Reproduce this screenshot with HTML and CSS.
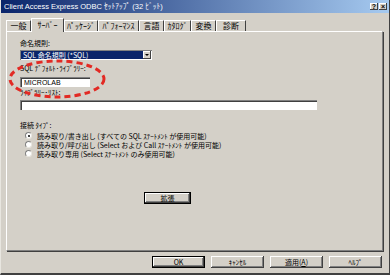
FILE: index.html
```html
<!DOCTYPE html>
<html lang="ja">
<head>
    <meta charset="UTF-8">
    <title>Client Access Express ODBC セットアップ</title>
    <link rel="stylesheet" href="styles.css">
</head>
<body>
    <div class="dialog">
        <div class="titlebar">
            <span class="title">Client Access Express ODBC ｾｯﾄｱｯﾌﾟ (32 ﾋﾞｯﾄ)</span>
            <div class="caption-btns">
                <span class="cbtn">?</span>
                <span class="cbtn">×</span>
            </div>
        </div>

        <div class="tabs">
            <div class="tab w1">一般</div>
            <div class="tab w2 active">ｻｰﾊﾞｰ</div>
            <div class="tab w3">ﾊﾟｯｹｰｼﾞ</div>
            <div class="tab w4">ﾊﾟﾌｫｰﾏﾝｽ</div>
            <div class="tab w5">言語</div>
            <div class="tab w6">ｶﾀﾛｸﾞ</div>
            <div class="tab w7">変換</div>
            <div class="tab w8">診断</div>
        </div>

        <div class="panel">
            <div class="label first">命名規則:</div>
            <div class="combo">
                <span class="combo-value">SQL 命名規則 (*SQL)</span>
                <span class="combo-btn"><span class="arrow"></span></span>
            </div>

            <div class="label gap-a">SQL ﾃﾞﾌｫﾙﾄ･ﾗｲﾌﾞﾗﾘｰ:</div>
            <div class="field short">MICROLAB</div>

            <div class="label gap-b">ﾗｲﾌﾞﾗﾘｰ･ﾘｽﾄ:</div>
            <div class="field wide"></div>

            <div class="label gap-c">接続 ﾀｲﾌﾟ:</div>
            <div class="radios">
                <div class="radio"><span class="dot checked"></span>読み取り/書き出し (すべての SQL ｽﾃｰﾄﾒﾝﾄ が使用可能)</div>
                <div class="radio"><span class="dot"></span>読み取り/呼び出し (Select および Call ｽﾃｰﾄﾒﾝﾄ が使用可能)</div>
                <div class="radio"><span class="dot"></span>読み取り専用 (Select ｽﾃｰﾄﾒﾝﾄ のみ使用可能)</div>
            </div>

            <div class="btn ext">拡張</div>
        </div>

        <div class="buttons">
            <div class="btn default">OK</div>
            <div class="btn">ｷｬﾝｾﾙ</div>
            <div class="btn">適用(<u>A</u>)</div>
            <div class="btn">ﾍﾙﾌﾟ</div>
        </div>

        <!-- red annotation drawn over the dialog -->
        <svg class="mark" width="390" height="275" viewBox="0 0 390 275">
            <ellipse cx="56" cy="79" rx="47" ry="18" fill="none" stroke="#e22a24" stroke-width="3" stroke-dasharray="6 4"/>
        </svg>
    </div>
</body>
</html>
```

FILE: styles.css
```css
body {
    margin: 0;
    font-family: "Liberation Sans", "Noto Sans CJK JP", sans-serif;
    font-size: 7px;
    color: #000;
    background: #d4d0c8;
}
.dialog {
    position: relative;
    width: 390px;
    height: 275px;
    box-sizing: border-box;
    background: #d4d0c8;
    border-left: 1px solid #e8e6e0;
    border-right: 1px solid #404040;
    border-bottom: 2px solid #404040;
    overflow: hidden;
}
.titlebar {
    height: 13px;
    display: flex;
    align-items: center;
    justify-content: space-between;
    padding: 0 2px 0 3px;
    background: linear-gradient(to right, #0a246a, #a6caf0);
    color: #fff;
}
.title {
    font-size: 7.5px;
    line-height: 13px;
}
.caption-btns {
    display: flex;
    gap: 1px;
}
.cbtn {
    width: 8px;
    height: 7px;
    background: #d4d0c8;
    color: #000;
    font-size: 7px;
    font-weight: bold;
    line-height: 7px;
    text-align: center;
    box-shadow: inset -1px -1px #404040, inset 1px 1px #fff;
}
.tabs {
    display: flex;
    align-items: flex-end;
    height: 14px;
    margin-top: 4px;
    padding-left: 5px;
}
.tab {
    height: 10px;
    font-family: "Noto Sans CJK JP", sans-serif;
    font-size: 8px;
    line-height: 10px;
    text-align: center;
    border-top: 1px solid #fff;
    border-left: 1px solid #fff;
    border-right: 1px solid #404040;
    box-sizing: content-box;
}
.tab.active {
    height: 13px;
    line-height: 11px;
    margin-bottom: -1px;
    position: relative;
    z-index: 1;
    background: #d4d0c8;
}
.w1 { width: 23px; }
.w2 { width: 31px; }
.w3 { width: 32px; }
.w4 { width: 39px; }
.w5 { width: 23px; }
.w6 { width: 25px; }
.w7 { width: 23px; }
.w8 { width: 28px; }
.panel {
    height: 220px;
    width: 377px;
    margin-left: 5px;
    box-sizing: border-box;
    padding: 7px 0 0 13px;
    border-top: 1px solid #fff;
    border-left: 1px solid #fff;
    border-right: 1px solid #808080;
    border-bottom: 1px solid #808080;
    box-shadow: 1px 1px 0 #404040;
    font-family: "Noto Sans CJK JP", sans-serif;
}
.label {
    height: 9px;
    line-height: 9px;
}
.gap-a { margin-top: 4px; }
.gap-b { margin-top: 1px; }
.gap-c { margin-top: 11px; }
.combo {
    display: flex;
    width: 132px;
    height: 10px;
    margin-top: 2px;
    box-sizing: border-box;
    padding: 1px;
    background: #fff;
    box-shadow: inset 1px 1px #808080;
}
.combo-value {
    flex: 1;
    background: #0a246a;
    color: #fff;
    line-height: 8px;
    padding-left: 2px;
}
.combo-btn {
    width: 8px;
    display: flex;
    align-items: center;
    justify-content: center;
    background: #d4d0c8;
    box-shadow: inset -1px -1px #404040, inset 1px 1px #fff;
}
.arrow {
    width: 0;
    height: 0;
    border-left: 2px solid transparent;
    border-right: 2px solid transparent;
    border-top: 2px solid #000;
}
.field {
    height: 10px;
    margin-top: 4px;
    box-sizing: border-box;
    padding-left: 3px;
    line-height: 10px;
    background: #fff;
    font-family: "Liberation Sans", sans-serif;
    border-top: 1px solid #808080;
    border-left: 1px solid #808080;
    box-shadow: inset 1px 1px #404040;
}
.field.short { width: 70px; }
.field.wide { width: 297px; margin-top: 3px; }
.radios {
    margin-top: 1px;
}
.radio {
    display: flex;
    align-items: center;
    height: 9px;
    padding-left: 5px;
    white-space: nowrap;
}
.dot {
    width: 7px;
    height: 7px;
    box-sizing: border-box;
    margin-right: 5px;
    border-radius: 50%;
    background: #fff;
    border: 1px solid #808080;
    border-right-color: #e8e6e0;
    border-bottom-color: #e8e6e0;
    position: relative;
}
.dot.checked::after {
    content: "";
    position: absolute;
    left: 1.5px;
    top: 1.5px;
    width: 2px;
    height: 2px;
    border-radius: 50%;
    background: #000;
}
.btn {
    height: 12px;
    width: 53px;
    box-sizing: border-box;
    line-height: 12px;
    text-align: center;
    font-family: "Noto Sans CJK JP", sans-serif;
    background: #d4d0c8;
    box-shadow: inset -1px -1px #404040, inset 1px 1px #fff, inset -2px -2px #808080;
}
.btn.ext {
    width: 47px;
    margin: 34px 0 0 124px;
    border: 1px solid #000;
    line-height: 10px;
}
.btn.default {
    border: 1px solid #000;
    line-height: 10px;
}
.btn u {
    text-decoration: underline;
}
.buttons {
    display: flex;
    justify-content: flex-end;
    gap: 6px;
    margin-top: 5px;
    padding-right: 7px;
}
.mark {
    position: absolute;
    left: 0;
    top: 0;
    pointer-events: none;
}
```
